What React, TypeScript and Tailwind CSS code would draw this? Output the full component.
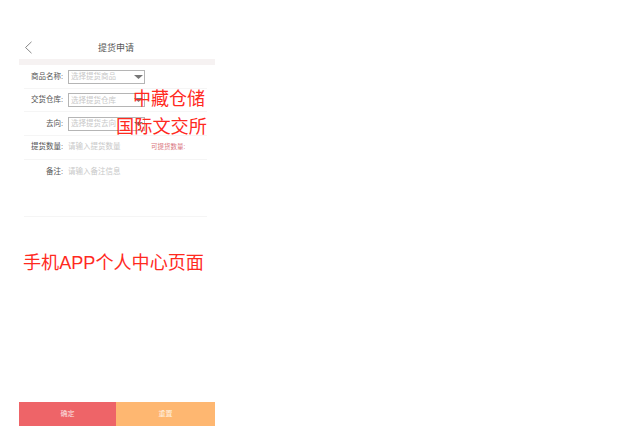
const font = "[font-family:'Liberation_Sans','Noto_Sans_CJK_SC',sans-serif]";

function SelectRow({ label, placeholder }: { label: string; placeholder: string }) {
  return (
    <div className="h-[23.5px] flex items-center border-b border-[#f5f5f5] ml-[5px] mr-[8px]">
      <span className="w-[39px] text-right text-[7.5px] text-[#555] whitespace-nowrap">{label}:</span>
      <div className="ml-[5px] mt-[1px] w-[77px] h-[14px] border border-[#b5b5b5] flex items-center justify-between pl-[2px] pr-[1px]">
        <span className="text-[7.5px] text-[#c8c8c8] whitespace-nowrap">{placeholder}</span>
        <svg width="9" height="4" viewBox="0 0 9 4"><path d="M0 0H9L4.5 4Z" fill="#777" /></svg>
      </div>
    </div>
  );
}

function InputRow({ label, placeholder, right }: { label: string; placeholder: string; right?: string }) {
  return (
    <div className="flex items-center">
      <span className="w-[39px] text-right text-[7.5px] text-[#555] whitespace-nowrap">{label}:</span>
      <span className="ml-[5px] w-[83px] text-[7.5px] text-[#c8c8c8] whitespace-nowrap">{placeholder}</span>
      {right && <span className="text-[6.5px] text-[#d9747c] whitespace-nowrap">{right}</span>}
    </div>
  );
}

export default function App() {
  return (
    <div className={`w-[636px] h-[434px] bg-white pt-[37px] pl-[19px] overflow-hidden ${font}`}>
      <div className="relative w-[196px] h-[389px] flex flex-col">
        <div className="h-[22px] relative flex items-center justify-center shrink-0">
          <svg className="absolute left-[5px] top-[4px]" width="9" height="13" viewBox="0 0 9 13" fill="none">
            <path d="M7.5 0.8L1.5 6.5L7.5 12.2" stroke="#888" strokeWidth="1" />
          </svg>
          <span className="text-[9px] text-[#555] -ml-[2px] mt-[1px]">提货申请</span>
        </div>
        <div className="h-[6px] bg-[#f6f2f2] shrink-0" />
        <SelectRow label="商品名称" placeholder="选择提货商品" />
        <SelectRow label="交货仓库" placeholder="选择提货仓库" />
        <SelectRow label="去向" placeholder="选择提货去向" />
        <div className="h-[24px] flex items-center border-b border-[#f5f5f5] ml-[5px] mr-[8px]">
          <InputRow label="提货数量" placeholder="请输入提货数量" right="可提货数量:" />
        </div>
        <div className="h-[57px] pt-[6px] border-b border-[#f5f5f5] ml-[5px] mr-[8px]">
          <InputRow label="备注" placeholder="请输入备注信息" />
        </div>
        <div className="flex-1" />
        <div className="h-[24px] flex shrink-0">
          <div className="w-[97px] bg-[#ee6468] flex items-center justify-center text-[7px] text-[#fbe3e3]">确定</div>
          <div className="flex-1 bg-[#feb771] flex items-center justify-center text-[7px] text-[#fff1e0]">重置</div>
        </div>
        <span className="absolute left-[114px] top-[52px] text-[18px] leading-[20px] text-[#ff2a1f] whitespace-nowrap">中藏仓储</span>
        <span className="absolute left-[97px] top-[80px] text-[18.2px] leading-[20px] text-[#ff2a1f] whitespace-nowrap">国际文交所</span>
        <span className="absolute left-[4px] top-[216px] text-[18.1px] leading-[20px] text-[#ff2a1f] whitespace-nowrap">手机APP个人中心页面</span>
      </div>
    </div>
  );
}
